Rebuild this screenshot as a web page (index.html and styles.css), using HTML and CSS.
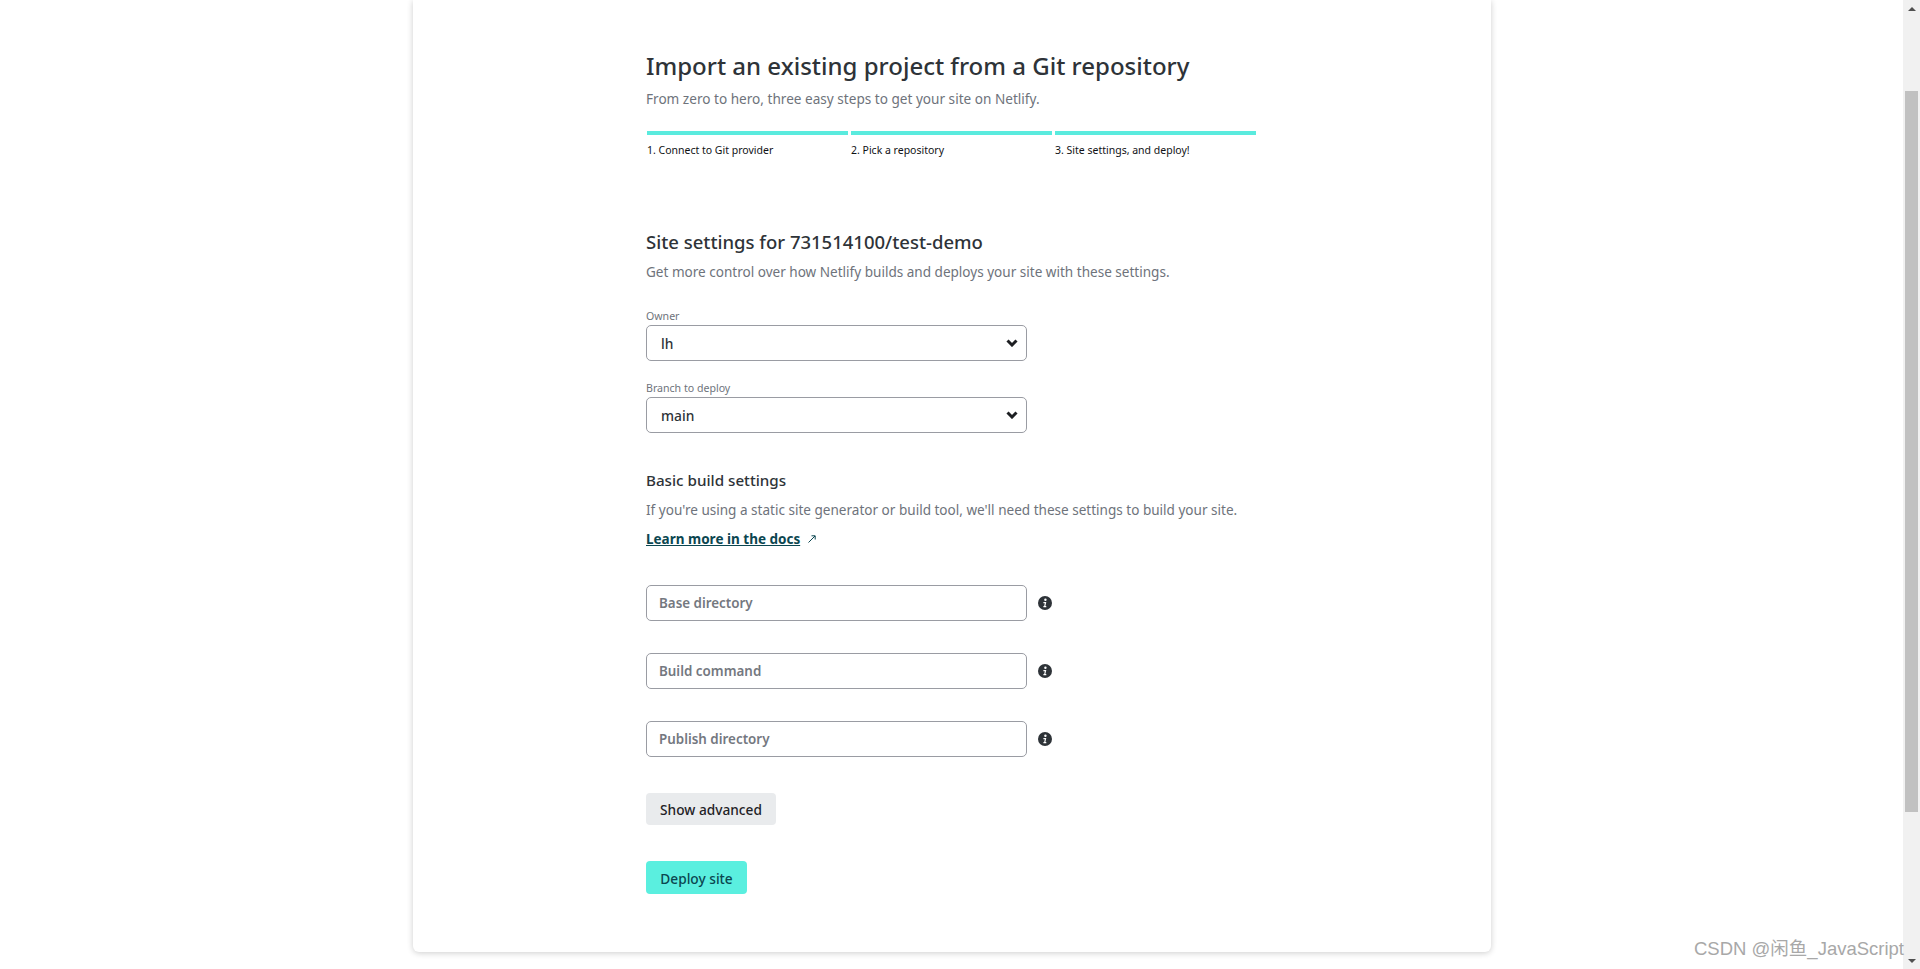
FILE: index.html
```html
<!DOCTYPE html>
<html lang="en">
<head>
  <meta charset="UTF-8" />
  <meta name="viewport" content="width=device-width, initial-scale=1.0" />
  <title>Import an existing project</title>
  <link rel="stylesheet" href="styles.css">
</head>
<body>
  <div class="page">
    <main class="card">
      <h1>Import an existing project from a Git repository</h1>
      <p class="lead">From zero to hero, three easy steps to get your site on Netlify.</p>

      <ol class="steps">
        <li>1. Connect to Git provider</li>
        <li>2. Pick a repository</li>
        <li>3. Site settings, and deploy!</li>
      </ol>

      <h2>Site settings for 731514100/test-demo</h2>
      <p class="muted">Get more control over how Netlify builds and deploys your site with these settings.</p>

      <div class="field owner">
        <span class="label">Owner</span>
        <div class="select">
          <span>lh</span>
          <svg class="chevron" viewBox="0 0 12 8"><path d="M1.5 1.5 6 6l4.5-4.5" /></svg>
        </div>
      </div>
      <div class="field branch">
        <span class="label">Branch to deploy</span>
        <div class="select">
          <span>main</span>
          <svg class="chevron" viewBox="0 0 12 8"><path d="M1.5 1.5 6 6l4.5-4.5" /></svg>
        </div>
      </div>

      <h3>Basic build settings</h3>
      <p class="muted">If you're using a static site generator or build tool, we'll need these settings to build your site.</p>
      <p class="docs"><a href="#">Learn more in the docs</a><svg class="arrow" viewBox="0 0 10 10"><path d="M1.5 8.5 8 2M4.5 1.8H8.2V5.5" /></svg></p>

      <div class="inputs">
        <div class="input-row">
          <div class="input">Base directory</div>
          <svg class="info" viewBox="0 0 14 14"><circle cx="7" cy="7" r="7" /><circle class="dot" cx="7.4" cy="3.7" r="1.2" /><path class="dot" d="M5.4 6h2.9l-.9 4h.9v1.2H5.4V10h.8l.6-2.8h-1.4z" /></svg>
        </div>
        <div class="input-row">
          <div class="input">Build command</div>
          <svg class="info" viewBox="0 0 14 14"><circle cx="7" cy="7" r="7" /><circle class="dot" cx="7.4" cy="3.7" r="1.2" /><path class="dot" d="M5.4 6h2.9l-.9 4h.9v1.2H5.4V10h.8l.6-2.8h-1.4z" /></svg>
        </div>
        <div class="input-row">
          <div class="input">Publish directory</div>
          <svg class="info" viewBox="0 0 14 14"><circle cx="7" cy="7" r="7" /><circle class="dot" cx="7.4" cy="3.7" r="1.2" /><path class="dot" d="M5.4 6h2.9l-.9 4h.9v1.2H5.4V10h.8l.6-2.8h-1.4z" /></svg>
        </div>
      </div>

      <button class="btn-advanced">Show advanced</button>
      <button class="btn-deploy">Deploy site</button>
    </main>
  </div>

  <div class="scrollbar">
    <span class="arrow-up"></span>
    <div class="track"><div class="thumb"></div></div>
    <span class="arrow-down"></span>
  </div>

  <div class="watermark">CSDN @闲鱼_JavaScript</div>
</body>
</html>
```

FILE: styles.css
```css
* { box-sizing: border-box; }
html, body { height: 100%; }
body {
  margin: 0;
  display: flex;
  overflow: hidden;
  background: #fff;
  font-family: "Noto Sans", "Noto Sans CJK SC", sans-serif;
  color: #2e3338;
}
.page { flex: 1; padding-left: 413px; }
.card {
  width: 1078px;
  height: 952px;
  padding: 0 0 0 233px;
  background: #fff;
  border-radius: 0 0 6px 6px;
  box-shadow: 0 1px 6px rgba(0,0,0,0.2);
}
h1 { margin: 0; padding-top: 49px; font-size: 24px; line-height: 34px; font-weight: 500; }
.lead { margin: 6px 0 0; font-size: 13.6px; line-height: 20px; color: #6e737b; }
.steps {
  display: flex;
  gap: 3px;
  width: 609px;
  margin: 22px 0 0 1px;
  padding: 0;
  list-style: none;
}
.steps li {
  flex: 1;
  padding-top: 7px;
  border-top: 4px solid #5aebde;
  font-size: 10.5px;
  line-height: 16px;
  color: #0f1114;
}
h2 { margin: 71px 0 0; font-size: 18.5px; line-height: 26px; font-weight: 500; }
.muted { margin: 7px 0 0; font-size: 13.55px; line-height: 20px; color: #6e737b; }
.field { width: 381px; }
.owner { margin-top: 26px; }
.branch { margin-top: 19px; }
.label { display: block; font-size: 10.6px; line-height: 16px; color: #6e737b; }
.select {
  display: flex;
  align-items: center;
  justify-content: space-between;
  height: 36px;
  margin-top: 1px;
  padding: 0 8px 0 14px;
  border: 1px solid #9a9ca3;
  border-radius: 5px;
  font-size: 13.8px;
  font-weight: 500;
}
.chevron { width: 12px; height: 8px; }
.chevron path { fill: none; stroke: #1d1f22; stroke-width: 3; }
h3 { margin: 35px 0 0; font-size: 15.2px; line-height: 25px; font-weight: 500; }
.docs { margin: 9px 0 0; font-size: 13.5px; line-height: 20px; display: flex; align-items: center; }
.docs a { color: #0b4650; font-weight: 700; }
.arrow { width: 10px; height: 10px; margin-left: 7px; }
.arrow path { fill: none; stroke: #0b4650; stroke-width: 1; }
.inputs { display: flex; flex-direction: column; gap: 32px; margin-top: 36px; }
.input-row { display: flex; align-items: center; gap: 11px; }
.input {
  display: flex;
  align-items: center;
  width: 381px;
  height: 36px;
  padding: 0 0 1px 12px;
  border: 1px solid #9a9ca3;
  border-radius: 5px;
  font-size: 13.4px;
  font-weight: 600;
  color: #74787f;
}
.info { width: 14px; height: 14px; fill: #2e3338; }
.info .dot { fill: #fff; }
button {
  display: block;
  height: 32px;
  padding: 0;
  border: none;
  border-radius: 4px;
  font-family: inherit;
  font-size: 13.7px;
  font-weight: 500;
  white-space: nowrap;
}
.btn-advanced { margin-top: 36px; width: 130px; background: #e9ebed; color: #1f2226; }
.btn-deploy { margin-top: 36px; width: 101px; height: 33px; padding-top: 1px; background: #5aefdf; color: #0b4650; }
.scrollbar {
  position: absolute;
  top: 0;
  right: 0;
  bottom: 0;
  display: flex;
  flex-direction: column;
  align-items: center;
  width: 17px;
  background: #f1f1f1;
}
.arrow-up, .arrow-down {
  width: 0;
  height: 0;
  border-left: 4px solid transparent;
  border-right: 4px solid transparent;
}
.arrow-up { margin-top: 7px; border-bottom: 4px solid #505050; }
.arrow-down { margin-bottom: 6px; border-top: 4px solid #505050; }
.track { flex: 1; width: 100%; padding: 80px 2px 0; }
.thumb { height: 721px; background: #c1c1c1; }
.watermark {
  position: absolute;
  right: 16px;
  bottom: 9px;
  font-family: "Liberation Sans", "Noto Sans CJK SC", sans-serif;
  font-size: 18.5px;
  color: #a8a8a8;
}
```
